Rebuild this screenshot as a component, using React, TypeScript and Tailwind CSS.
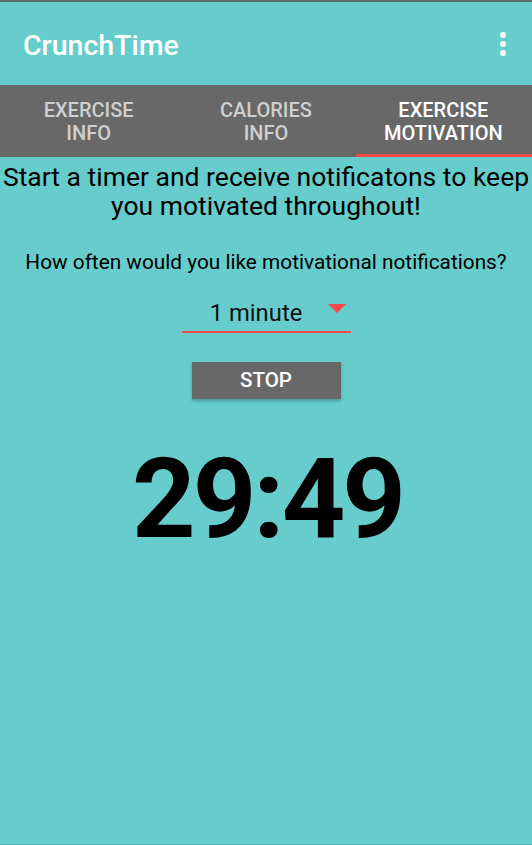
export default function App() {
  const tabs = [
    { top: 'EXERCISE', bottom: 'INFO', active: false },
    { top: 'CALORIES', bottom: 'INFO', active: false },
    { top: 'EXERCISE', bottom: 'MOTIVATION', active: true },
  ];

  return (
    <div className="h-screen w-full flex flex-col bg-[#66cdcc] font-['Roboto',sans-serif] border-b border-[#55b3b2]">
      {/* status strip */}
      <div className="h-[2px] bg-[#5f6b6b]" />

      {/* App bar */}
      <div className="h-[83px] flex items-center justify-between pl-[23px] pr-[26px]">
        <h1 className="text-[28.5px] font-medium text-white pt-[5px]">CrunchTime</h1>
        <div className="flex flex-col gap-[3px] items-center">
          <span className="w-[6px] h-[6px] rounded-full bg-white" />
          <span className="w-[6px] h-[6px] rounded-full bg-white" />
          <span className="w-[6px] h-[6px] rounded-full bg-white" />
        </div>
      </div>

      {/* Tabs */}
      <div className="h-[72px] bg-[#686868] grid grid-cols-3">
        {tabs.map((t, i) => (
          <div key={i} className="relative flex flex-col items-center justify-center pt-[1px]">
            <span
              className={`text-[20px] font-medium leading-[23px] text-center ${
                t.active ? 'text-white' : 'text-[#cfcfcf]'
              }`}
            >
              {t.top}
              <br />
              {t.bottom}
            </span>
            {t.active && <div className="absolute bottom-0 left-[1px] right-0 h-[3px] bg-[#f24a4a]" />}
          </div>
        ))}
      </div>

      {/* Content */}
      <div className="flex flex-col items-center">
        <p className="mt-[5px] text-[26.5px] leading-[29px] text-black text-center w-full whitespace-nowrap">
          Start a timer and receive notificatons to keep
          <br />
          you motivated throughout!
        </p>
        <p className="mt-[30px] text-[20.8px] text-black leading-[24px] whitespace-nowrap">
          How often would you like motivational notifications?
        </p>

        <div className="mt-[22px] w-[169px] h-[37px] relative flex items-center justify-center border-b-2 border-[#f24a4a]">
          <span className="text-[23.8px] text-[#111] pr-[20px] pt-[1px]">1 minute</span>
          <svg className="absolute right-[5px] top-[8px]" width="18" height="9" viewBox="0 0 18 9">
            <polygon points="0,0 18,0 9,9" fill="#f24a4a" />
          </svg>
        </div>

        <button className="mt-[29px] w-[149px] h-[37px] bg-[#686868] text-white text-[20.5px] font-medium shadow-[0_2px_3px_rgba(0,0,0,0.25)]">
          STOP
        </button>

        <div className="mt-[35px] text-[111px] font-bold leading-[130px] text-black tracking-[-3px] pl-[3px]">29:49</div>
      </div>
    </div>
  );
}
